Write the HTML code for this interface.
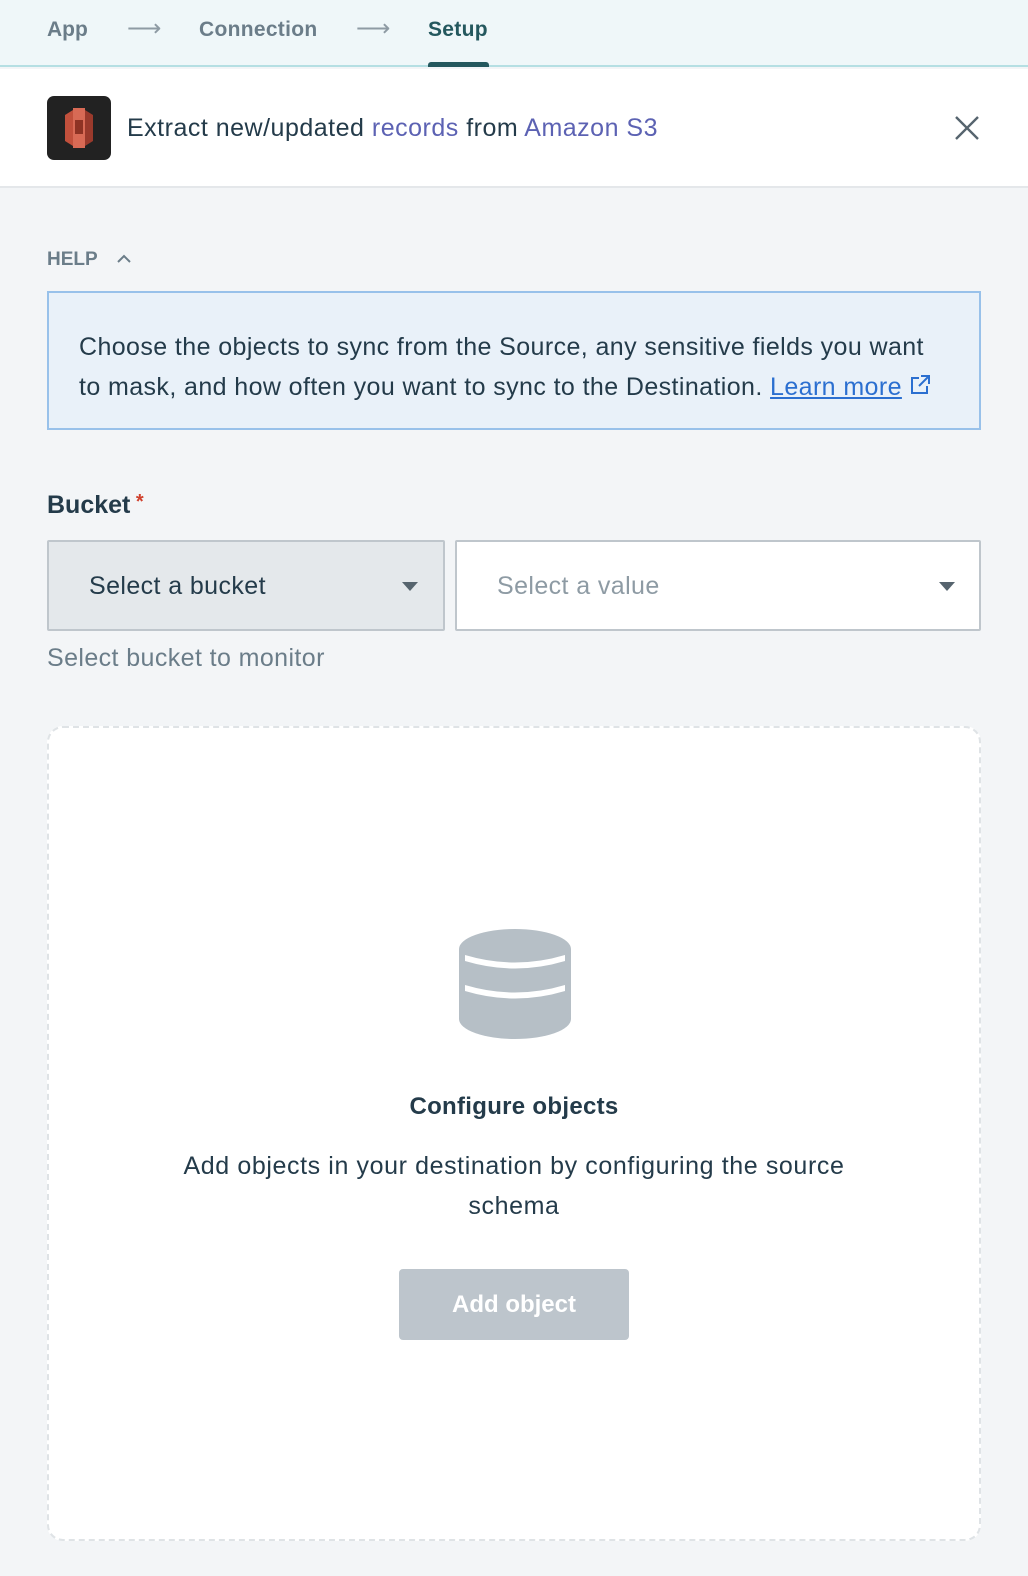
<!DOCTYPE html>
<html><head><meta charset="utf-8"><style>
*{margin:0;padding:0;box-sizing:border-box}
body{width:1028px;height:1576px;background:#f3f5f7;font-family:"Liberation Sans",sans-serif;color:#243b4a;position:relative;overflow:hidden}
.a{position:absolute;white-space:nowrap}
</style></head><body>
<div class="a" style="left:0;top:0;width:1028px;height:67px;background:#eff7f9;border-bottom:2px solid #b5dfe3"></div>
<div class="a" style="left:47px;top:18px;font-size:21px;font-weight:bold;color:#6b7d89">App</div>
<div class="a" style="left:127px;top:14px;font-size:24px;color:#8e9ba4">⟶</div>
<div class="a" style="left:199px;top:18px;font-size:21px;font-weight:bold;color:#6b7d89;letter-spacing:0.3px">Connection</div>
<div class="a" style="left:356px;top:14px;font-size:24px;color:#8e9ba4">⟶</div>
<div class="a" style="left:428px;top:18px;font-size:21px;font-weight:bold;color:#24585e;letter-spacing:0.3px">Setup</div>
<div class="a" style="left:428px;top:62px;width:61px;height:5px;background:#24585e;border-radius:3px 3px 0 0"></div>
<div class="a" style="left:0;top:69px;width:1028px;height:119px;background:#fff;border-bottom:2px solid #e4e7ea"></div>
<div class="a" style="left:47px;top:96px;width:64px;height:64px;background:#222;border-radius:7px">
<svg width="64" height="64" viewBox="0 0 64 64"><path d="M18 19 L26 14 L26 50 L18 45Z" fill="#c1503c"/><path d="M46 19 L38 14 L38 50 L46 45Z" fill="#9a3a2c"/><rect x="26" y="12" width="12" height="40" fill="#d86a55"/><rect x="28" y="24" width="8" height="14" fill="#8e3324"/></svg></div>
<div class="a" style="left:127px;top:114px;font-size:25px;color:#243b4a;letter-spacing:0.5px">Extract new/updated <span style="color:#5c62b3">records</span> from <span style="color:#5c62b3">Amazon S3</span></div>
<svg class="a" style="left:954px;top:115px" width="26" height="26" viewBox="0 0 26 26"><path d="M2 2L24 24M24 2L2 24" stroke="#56646e" stroke-width="2.4"/></svg>
<div class="a" style="left:47px;top:249px;font-size:19px;font-weight:bold;color:#6b7d89">HELP</div>
<svg class="a" style="left:116px;top:253px" width="16" height="12" viewBox="0 0 16 12"><path d="M2 9L8 3L14 9" stroke="#6b7d89" stroke-width="2" fill="none"/></svg>
<div class="a" style="left:47px;top:291px;width:934px;height:139px;background:#e9f1f9;border:2px solid #98c1ea"></div>
<div class="a" style="left:79px;top:327px;font-size:25px;line-height:40px;color:#243b4a;letter-spacing:0.4px">Choose the objects to sync from the Source, any sensitive fields you want<br>to mask, and how often you want to sync to the Destination. <span style="color:#2b6fd0;text-decoration:underline">Learn more</span> <svg width="22" height="22" viewBox="0 0 22 22" style="vertical-align:-1px"><path d="M10 4H3V19H18V12M12 2H20V10M20 2L10 12" stroke="#2b6fd0" stroke-width="2" fill="none"/></svg></div>
<div class="a" style="left:47px;top:491px;font-size:25px;font-weight:bold;color:#243b4a">Bucket<span style="color:#d0402c;font-size:20px;vertical-align:top"> *</span></div>
<div class="a" style="left:47px;top:540px;width:398px;height:91px;background:#e4e8eb;border:2px solid #bfc6cc;border-radius:2px"></div>
<div class="a" style="left:89px;top:572px;font-size:25px;color:#243b4a;letter-spacing:0.4px">Select a bucket</div>
<div class="a" style="left:402px;top:582px;border-left:8px solid transparent;border-right:8px solid transparent;border-top:9px solid #56646e"></div>
<div class="a" style="left:455px;top:540px;width:526px;height:91px;background:#fff;border:2px solid #bfc6cc;border-radius:2px"></div>
<div class="a" style="left:497px;top:572px;font-size:25px;color:#8e9ba4;letter-spacing:0.4px">Select a value</div>
<div class="a" style="left:939px;top:582px;border-left:8px solid transparent;border-right:8px solid transparent;border-top:9px solid #56646e"></div>
<div class="a" style="left:47px;top:644px;font-size:25px;color:#6b7d89;letter-spacing:0.4px">Select bucket to monitor</div>
<div class="a" style="left:47px;top:726px;width:934px;height:815px;background:#fff;border:2px dashed #dfe3e6;border-radius:16px"></div>
<svg class="a" style="left:458px;top:928px" width="114" height="112" viewBox="0 0 114 112"><ellipse cx="57" cy="21" rx="56" ry="20" fill="#b6bfc6"/><rect x="1" y="21" width="112" height="70" fill="#b6bfc6"/><ellipse cx="57" cy="91" rx="56" ry="20" fill="#b6bfc6"/><path d="M7 27 Q57 42 107 27 V33 Q57 48 7 33Z" fill="#fff"/><path d="M7 57 Q57 72 107 57 V63 Q57 78 7 63Z" fill="#fff"/></svg>
<div class="a" style="left:0;width:1028px;text-align:center;top:1093px;font-size:24px;font-weight:bold;color:#243b4a;letter-spacing:0.3px">Configure objects</div>
<div class="a" style="left:0;width:1028px;text-align:center;top:1146px;font-size:25px;line-height:40px;color:#243b4a;letter-spacing:0.6px">Add objects in your destination by configuring the source<br>schema</div>
<div class="a" style="left:399px;top:1269px;width:230px;height:71px;background:#bdc5cc;border-radius:4px;color:#fff;font-size:24px;font-weight:bold;text-align:center;line-height:71px">Add object</div>
</body></html>
